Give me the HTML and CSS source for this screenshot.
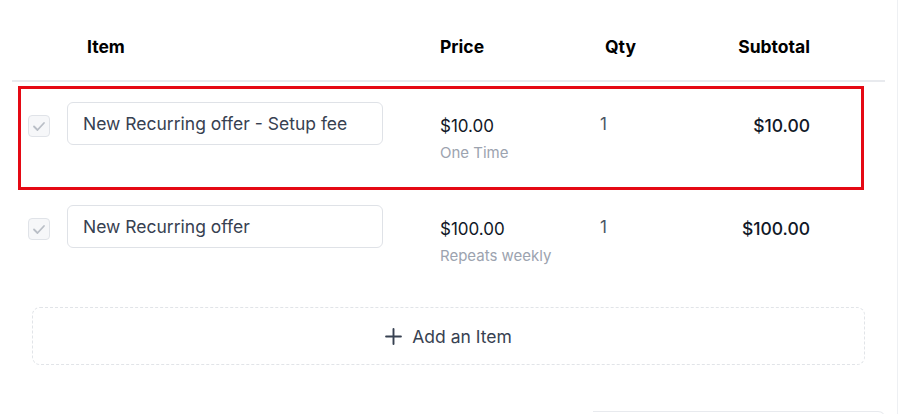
FILE: index.html
```html
<!DOCTYPE html>
<html>
<head>
<meta charset="utf-8">
<link rel="stylesheet" href="styles.css">
</head>
<body>
<div class="page">
  <div class="items">
    <div class="grid head">
      <div></div>
      <div class="h-item">Item</div>
      <div>Price</div>
      <div class="h-qty">Qty</div>
      <div class="right">Subtotal</div>
    </div>
    <div class="grid row highlighted">
      <div><span class="check"><svg viewBox="0 0 22 22" width="22" height="22"><path d="M6 11.5l3.5 3.5L16 8" fill="none" stroke="#b9bec6" stroke-width="1.8" stroke-linecap="round" stroke-linejoin="round"/></svg></span></div>
      <div><div class="input">New Recurring offer - Setup fee</div></div>
      <div class="price"><div class="amount">$10.00</div><div class="sub">One Time</div></div>
      <div class="qty">1</div>
      <div class="right total">$10.00</div>
    </div>
    <div class="grid row">
      <div><span class="check"><svg viewBox="0 0 22 22" width="22" height="22"><path d="M6 11.5l3.5 3.5L16 8" fill="none" stroke="#b9bec6" stroke-width="1.8" stroke-linecap="round" stroke-linejoin="round"/></svg></span></div>
      <div><div class="input">New Recurring offer</div></div>
      <div class="price"><div class="amount">$100.00</div><div class="sub">Repeats weekly</div></div>
      <div class="qty">1</div>
      <div class="right total">$100.00</div>
    </div>
    <div class="add">
      <svg viewBox="0 0 16 16" width="17" height="17"><path d="M8 1v14M1 8h14" stroke="#374151" stroke-width="1.8" stroke-linecap="round"/></svg>
      <span>Add an Item</span>
    </div>
  </div>
  <div class="card-edge"></div>
</div>
</body>
</html>
```
FILE: styles.css
```css
html, body {
  margin: 0;
  padding: 0;
  background: #fff;
}
body {
  font-family: Inter, "Liberation Sans", Arial, sans-serif;
  color: #111827;
  width: 899px;
  height: 414px;
  overflow: hidden;
}
.page {
  width: 898px;
  height: 414px;
  border-right: 1px solid #eef0f3;
  box-sizing: border-box;
}
.items {
  margin-left: 12px;
  width: 873px;
}
.grid {
  display: grid;
  grid-template-columns: 39px 373px 160px 1fr 120px;
  padding: 0 75px 0 16px;
}
.head {
  height: 68px;
  padding-top: 12px;
  align-items: center;
  font-weight: 700;
  font-size: 17.5px;
  color: #000;
  border-bottom: 2px solid #e8eaee;
}
.h-item { padding-left: 20px; }
.h-qty { padding-left: 5px; }
.right { text-align: right; }
.row {
  height: 63px;
  padding-top: 20px;
  padding-bottom: 20px;
  align-items: start;
}
.highlighted {
  position: relative;
}
.highlighted::after {
  content: "";
  position: absolute;
  left: 6px;
  top: 4px;
  width: 846px;
  height: 104px;
  box-sizing: border-box;
  border: 3px solid #e50914;
}
.check {
  display: block;
  width: 22px;
  height: 22px;
  margin-top: 13px;
  box-sizing: border-box;
  border: 1px solid #e0e3e8;
  border-radius: 4px;
  background: #f6f7f9;
  position: relative;
}
.check svg {
  position: absolute;
  left: -1px;
  top: -1px;
}
.input {
  width: 316px;
  height: 43px;
  box-sizing: border-box;
  border: 1px solid #dfe2e7;
  border-radius: 6px;
  padding-left: 15px;
  display: flex;
  align-items: center;
  font-size: 17.5px;
  color: #374151;
}
.price {
  padding-top: 12px;
}
.amount {
  font-size: 17px;
  line-height: 24px;
  color: #111827;
}
.sub {
  margin-top: 5px;
  font-size: 15px;
  line-height: 20px;
  color: #9ca3af;
}
.qty {
  padding-top: 10px;
  font-size: 17px;
  line-height: 24px;
  color: #4b5563;
}
.total {
  padding-top: 12px;
  font-size: 17.5px;
  line-height: 24px;
  font-weight: 500;
  color: #111827;
}
.add {
  margin: 19px 20px 0 20px;
  height: 58px;
  box-sizing: border-box;
  border: 1.5px dashed #e1e4e8;
  border-radius: 8px;
  display: flex;
  align-items: center;
  justify-content: center;
  gap: 10px;
  font-size: 17.5px;
  font-weight: 400;
  color: #374151;
}
.card-edge {
  margin-left: 593px;
  margin-top: 46px;
  width: 293px;
  height: 10px;
  box-sizing: border-box;
  border-top: 1px solid #e8eaee;
  border-right: 1px solid #eef0f3;
  border-radius: 0 8px 0 0;
}
```
